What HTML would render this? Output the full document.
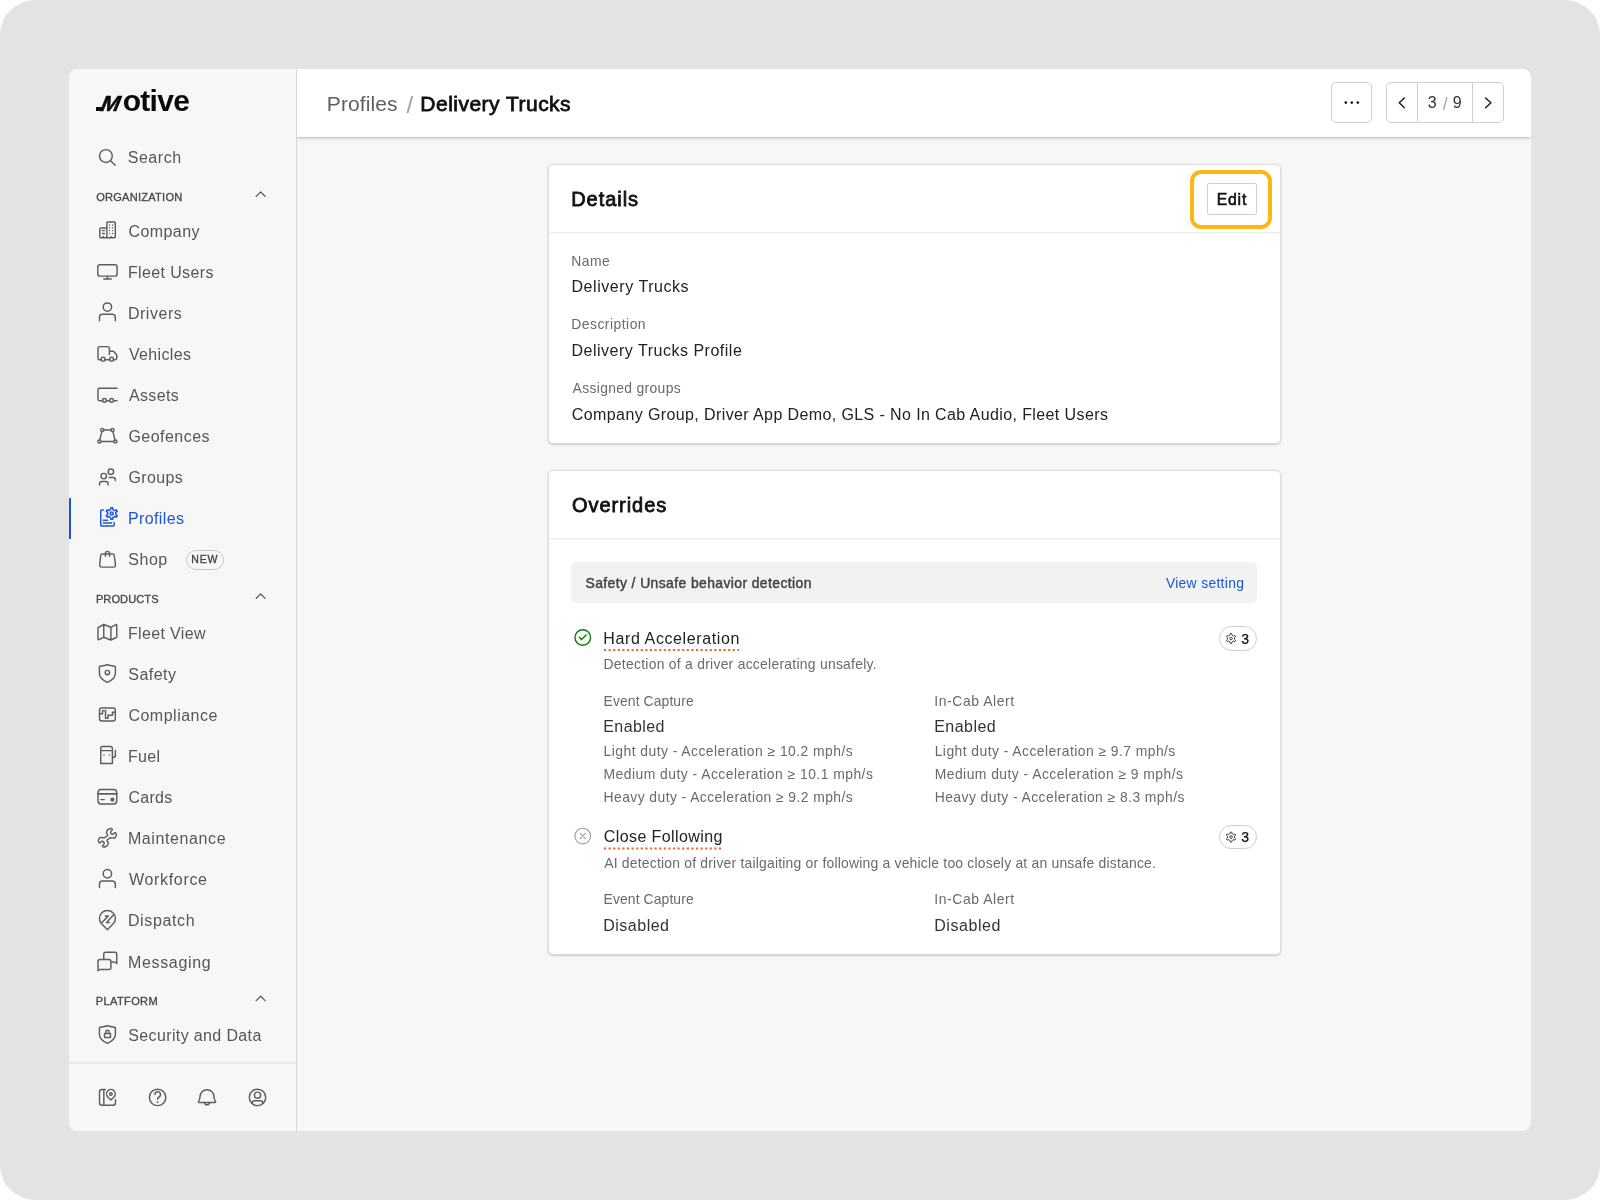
<!DOCTYPE html><html lang="en"><head><meta charset="utf-8"><title>Profiles / Delivery Trucks</title><style>
*{box-sizing:border-box;margin:0;padding:0}
html,body{width:1600px;height:1200px;overflow:hidden;background:#fff}
body{position:relative;font-family:"Liberation Sans",sans-serif}
.a{position:absolute}
.t{position:absolute;white-space:pre;line-height:1;font-family:"Liberation Sans",sans-serif}
#bg{left:0;top:0;width:1600px;height:1200px;background:#e3e3e3;border-radius:35px}
#panel{left:69px;top:69px;width:1462px;height:1062px;background:#f7f7f7;border-radius:8px;overflow:hidden}
#side{left:69px;top:69px;width:228px;height:1062px;border-right:1px solid #d6d6d6;border-radius:8px 0 0 8px}
#sdiv{left:69px;top:1062px;width:227px;height:2px;background:linear-gradient(#e7e7e7 50%,#ededed 50%)}
#active{left:69px;top:498px;width:2px;height:41px;background:#1a56d6}
#head{left:297px;top:69px;width:1234px;height:68px;background:#fff;border-radius:0 8px 0 0;box-shadow:0 1px 2px rgba(0,0,0,.17),0 2px 5px rgba(0,0,0,.09);clip-path:inset(0 0 -12px 0)}
.btn{background:#fff;border:1px solid #cfcfcf;border-radius:5px}
.card{background:#fff;border:1px solid #e0e0e0;border-bottom-color:#d8d8d8;border-radius:5px;box-shadow:0 0 0 1px rgba(0,0,0,.028),0 1px 2px rgba(0,0,0,.15)}
.hr{height:2px;background:linear-gradient(#eeeeee 50%,#f6f6f6 50%)}
.pill{border:1px solid #cfcfcf;border-radius:20px;background:#fff}
</style></head><body>
<div class="a" id="bg"></div><div class="a" id="panel"></div><div class="a" id="side"></div><div class="a" id="sdiv"></div><div class="a" id="active"></div>
<div class="a" id="head"></div>
<div class="a btn" style="left:1331px;top:82px;width:41px;height:41px"></div>
<div class="a btn" style="left:1386px;top:82px;width:118px;height:41px"></div>
<div class="a" style="left:1417px;top:83px;width:1px;height:39px;background:#cfcfcf"></div>
<div class="a" style="left:1472px;top:83px;width:1px;height:39px;background:#cfcfcf"></div>
<div class="a card" style="left:548px;top:164px;width:733px;height:280px"></div>
<div class="a hr" style="left:549px;top:232px;width:731px"></div>
<div class="a" style="left:1190px;top:170.4px;width:82px;height:58.4px;border:4px solid #fdb714;border-radius:11px"></div>
<div class="a" style="left:1207px;top:183px;width:50px;height:32px;border:1px solid #cfcfcf;background:#fff;border-radius:2px"></div>
<div class="a card" style="left:548px;top:470px;width:733px;height:485px"></div>
<div class="a hr" style="left:549px;top:538px;width:731px"></div>
<div class="a" style="left:571px;top:562px;width:686px;height:41px;background:#f2f2f2;border-radius:5px"></div>
<div class="a pill" style="left:1218.6px;top:626.2px;width:38.4px;height:24.4px"></div>
<div class="a pill" style="left:1218.6px;top:824.8px;width:38.4px;height:24.4px"></div>
<div class="a pill" style="left:186px;top:550.2px;width:37.7px;height:20.3px;background:transparent;border-color:#c9c9c9"></div>
<div class="a" id="tx" style="left:0;top:0;width:1600px;height:1200px;will-change:transform">
<div class="t" style="left:128.41px;top:224.00px;font-size:16.0px;font-weight:400;color:#565656;letter-spacing:0.437px;">Company</div>
<div class="t" style="left:127.93px;top:265.00px;font-size:16.0px;font-weight:400;color:#565656;letter-spacing:0.373px;">Fleet Users</div>
<div class="t" style="left:127.93px;top:306.00px;font-size:16.0px;font-weight:400;color:#565656;letter-spacing:0.526px;">Drivers</div>
<div class="t" style="left:128.89px;top:347.00px;font-size:16.0px;font-weight:400;color:#565656;letter-spacing:0.370px;">Vehicles</div>
<div class="t" style="left:128.96px;top:388.00px;font-size:16.0px;font-weight:400;color:#565656;letter-spacing:0.343px;">Assets</div>
<div class="t" style="left:128.41px;top:429.00px;font-size:16.0px;font-weight:400;color:#565656;letter-spacing:0.472px;">Geofences</div>
<div class="t" style="left:128.41px;top:470.00px;font-size:16.0px;font-weight:400;color:#565656;letter-spacing:0.363px;">Groups</div>
<div class="t" style="left:127.93px;top:511.00px;font-size:16.0px;font-weight:400;color:#1a56d6;letter-spacing:0.400px;">Profiles</div>
<div class="t" style="left:128.25px;top:552.00px;font-size:16.0px;font-weight:400;color:#565656;letter-spacing:0.547px;">Shop</div>
<div class="t" style="left:127.93px;top:626.00px;font-size:16.0px;font-weight:400;color:#565656;letter-spacing:0.351px;">Fleet View</div>
<div class="t" style="left:128.25px;top:667.00px;font-size:16.0px;font-weight:400;color:#565656;letter-spacing:0.484px;">Safety</div>
<div class="t" style="left:128.41px;top:708.00px;font-size:16.0px;font-weight:400;color:#565656;letter-spacing:0.500px;">Compliance</div>
<div class="t" style="left:127.93px;top:749.00px;font-size:16.0px;font-weight:400;color:#565656;letter-spacing:0.304px;">Fuel</div>
<div class="t" style="left:128.41px;top:790.00px;font-size:16.0px;font-weight:400;color:#565656;letter-spacing:0.274px;">Cards</div>
<div class="t" style="left:127.93px;top:831.00px;font-size:16.0px;font-weight:400;color:#565656;letter-spacing:0.608px;">Maintenance</div>
<div class="t" style="left:128.97px;top:872.00px;font-size:16.0px;font-weight:400;color:#565656;letter-spacing:0.677px;">Workforce</div>
<div class="t" style="left:127.93px;top:913.00px;font-size:16.0px;font-weight:400;color:#565656;letter-spacing:0.636px;">Dispatch</div>
<div class="t" style="left:127.93px;top:955.00px;font-size:16.0px;font-weight:400;color:#565656;letter-spacing:0.681px;">Messaging</div>
<div class="t" style="left:128.25px;top:1028.00px;font-size:16.0px;font-weight:400;color:#565656;letter-spacing:0.369px;">Security and Data</div>
<div class="t" style="left:127.67px;top:150.00px;font-size:16.0px;font-weight:400;color:#565656;letter-spacing:0.571px;">Search</div>
<div class="t" style="left:96.13px;top:192.00px;font-size:11.1px;font-weight:400;color:#454545;letter-spacing:0.232px;-webkit-text-stroke:0.3px #454545;">ORGANIZATION</div>
<div class="t" style="left:95.89px;top:594.00px;font-size:11.1px;font-weight:400;color:#454545;letter-spacing:0.059px;-webkit-text-stroke:0.3px #454545;">PRODUCTS</div>
<div class="t" style="left:95.86px;top:996.00px;font-size:11.1px;font-weight:400;color:#454545;letter-spacing:0.323px;-webkit-text-stroke:0.3px #454545;">PLATFORM</div>
<div class="t" style="left:191.30px;top:554.00px;font-size:10.6px;font-weight:400;color:#444;letter-spacing:0.742px;-webkit-text-stroke:0.35px #444;">NEW</div>
<div class="t" style="left:326.86px;top:93.00px;font-size:21.0px;font-weight:400;color:#606060;letter-spacing:0.091px;">Profiles</div>
<div class="t" style="left:406.56px;top:93.00px;font-size:24.0px;font-weight:400;color:#a0a0a0;letter-spacing:0.000px;">/</div>
<div class="t" style="left:420.35px;top:93.00px;font-size:21.0px;font-weight:400;color:#111;letter-spacing:0.481px;-webkit-text-stroke:0.8px #111;">Delivery Trucks</div>
<div class="t" style="left:1427.64px;top:95.00px;font-size:16.0px;font-weight:400;color:#333;letter-spacing:0.000px;">3</div>
<div class="t" style="left:1442.84px;top:96.00px;font-size:17.5px;font-weight:400;color:#a8a8a8;letter-spacing:0.000px;">/</div>
<div class="t" style="left:1452.66px;top:95.00px;font-size:16.0px;font-weight:400;color:#333;letter-spacing:0.000px;">9</div>
<div class="t" style="left:571.17px;top:189.00px;font-size:20.0px;font-weight:400;color:#111;letter-spacing:0.970px;-webkit-text-stroke:0.8px #111;">Details</div>
<div class="t" style="left:1216.69px;top:192.00px;font-size:15.8px;font-weight:400;color:#111;letter-spacing:0.798px;-webkit-text-stroke:0.6px #111;">Edit</div>
<div class="t" style="left:571.22px;top:255.00px;font-size:13.9px;font-weight:400;color:#6a6a6a;letter-spacing:0.455px;">Name</div>
<div class="t" style="left:571.46px;top:279.00px;font-size:16.0px;font-weight:400;color:#222;letter-spacing:0.556px;">Delivery Trucks</div>
<div class="t" style="left:571.22px;top:318.00px;font-size:13.9px;font-weight:400;color:#6a6a6a;letter-spacing:0.487px;">Description</div>
<div class="t" style="left:571.46px;top:343.00px;font-size:16.0px;font-weight:400;color:#222;letter-spacing:0.508px;">Delivery Trucks Profile</div>
<div class="t" style="left:572.59px;top:382.00px;font-size:13.9px;font-weight:400;color:#6a6a6a;letter-spacing:0.329px;">Assigned groups</div>
<div class="t" style="left:571.86px;top:407.00px;font-size:16.0px;font-weight:400;color:#222;letter-spacing:0.394px;">Company Group, Driver App Demo, GLS - No In Cab Audio, Fleet Users</div>
<div class="t" style="left:571.92px;top:495.00px;font-size:20.0px;font-weight:400;color:#111;letter-spacing:0.962px;-webkit-text-stroke:0.8px #111;">Overrides</div>
<div class="t" style="left:585.53px;top:577.00px;font-size:13.9px;font-weight:400;color:#444;letter-spacing:0.409px;-webkit-text-stroke:0.45px #444;">Safety / Unsafe behavior detection</div>
<div class="t" style="left:1165.88px;top:577.00px;font-size:13.9px;font-weight:400;color:#1a56d6;letter-spacing:0.308px;">View setting</div>
<div class="t" style="left:603.27px;top:631.00px;font-size:16.0px;font-weight:400;color:#222;letter-spacing:0.616px;">Hard Acceleration</div>
<div class="t" style="left:603.55px;top:658.00px;font-size:13.9px;font-weight:400;color:#6a6a6a;letter-spacing:0.270px;">Detection of a driver accelerating unsafely.</div>
<div class="t" style="left:603.55px;top:695.00px;font-size:13.9px;font-weight:400;color:#6a6a6a;letter-spacing:0.108px;">Event Capture</div>
<div class="t" style="left:603.28px;top:719.00px;font-size:16.0px;font-weight:400;color:#333;letter-spacing:0.404px;">Enabled</div>
<div class="t" style="left:603.55px;top:745.00px;font-size:13.9px;font-weight:400;color:#6a6a6a;letter-spacing:0.456px;">Light duty - Acceleration ≥ 10.2 mph/s</div>
<div class="t" style="left:603.55px;top:768.00px;font-size:13.9px;font-weight:400;color:#6a6a6a;letter-spacing:0.467px;">Medium duty - Acceleration ≥ 10.1 mph/s</div>
<div class="t" style="left:603.55px;top:791.00px;font-size:13.9px;font-weight:400;color:#6a6a6a;letter-spacing:0.426px;">Heavy duty - Acceleration ≥ 9.2 mph/s</div>
<div class="t" style="left:934.30px;top:695.00px;font-size:13.9px;font-weight:400;color:#6a6a6a;letter-spacing:0.591px;">In-Cab Alert</div>
<div class="t" style="left:934.17px;top:719.00px;font-size:16.0px;font-weight:400;color:#333;letter-spacing:0.480px;">Enabled</div>
<div class="t" style="left:934.71px;top:745.00px;font-size:13.9px;font-weight:400;color:#6a6a6a;letter-spacing:0.445px;">Light duty - Acceleration ≥ 9.7 mph/s</div>
<div class="t" style="left:934.71px;top:768.00px;font-size:13.9px;font-weight:400;color:#6a6a6a;letter-spacing:0.455px;">Medium duty - Acceleration ≥ 9 mph/s</div>
<div class="t" style="left:934.71px;top:791.00px;font-size:13.9px;font-weight:400;color:#6a6a6a;letter-spacing:0.442px;">Heavy duty - Acceleration ≥ 8.3 mph/s</div>
<div class="t" style="left:1241.29px;top:632.00px;font-size:14.0px;font-weight:400;color:#111;letter-spacing:0.000px;-webkit-text-stroke:0.25px #111;">3</div>
<div class="t" style="left:603.75px;top:829.00px;font-size:16.0px;font-weight:400;color:#222;letter-spacing:0.408px;">Close Following</div>
<div class="t" style="left:604.19px;top:857.00px;font-size:13.9px;font-weight:400;color:#6a6a6a;letter-spacing:0.216px;">AI detection of driver tailgaiting or following a vehicle too closely at an unsafe distance.</div>
<div class="t" style="left:603.55px;top:893.00px;font-size:13.9px;font-weight:400;color:#6a6a6a;letter-spacing:0.108px;">Event Capture</div>
<div class="t" style="left:603.28px;top:918.00px;font-size:16.0px;font-weight:400;color:#333;letter-spacing:0.496px;">Disabled</div>
<div class="t" style="left:934.30px;top:893.00px;font-size:13.9px;font-weight:400;color:#6a6a6a;letter-spacing:0.591px;">In-Cab Alert</div>
<div class="t" style="left:934.17px;top:918.00px;font-size:16.0px;font-weight:400;color:#333;letter-spacing:0.578px;">Disabled</div>
<div class="t" style="left:1241.29px;top:830.00px;font-size:14.0px;font-weight:400;color:#111;letter-spacing:0.000px;-webkit-text-stroke:0.25px #111;">3</div>
</div>
<div class="a" style="left:95.9px;top:107.3px;width:7px;height:3.7px;background:#0a0a0a"></div>
<div class="t" id="logo" style="left:99.0px;top:86px;font-size:30px;font-weight:700;color:#0a0a0a;letter-spacing:-0.75px"><span id="lm" style="display:inline-block;font-size:21.8px;letter-spacing:0;width:23.8px;transform-origin:0 80%;transform:skewX(-22deg) scaleX(1.04);-webkit-text-stroke:0.45px #0a0a0a">M</span>otive</div>
<svg class="a" style="left:0;top:0" width="1600" height="1200" viewBox="0 0 1600 1200"><g fill="none" stroke="#5e5e5e" stroke-width="1.45" stroke-linecap="round" stroke-linejoin="round">
<circle cx="105.9" cy="156" r="6.4"/><path d="M110.6,160.7 L115.2,165.3"/>
<path d="M106.9,238 V223.2 a1.2,1.2 0 0 1 1.2,-1.2 h6 a1.2,1.2 0 0 1 1.2,1.2 V236.6 a1.2,1.2 0 0 1 -1.2,1.2 H101 a1.2,1.2 0 0 1 -1.2,-1.2 V229.2 a1.2,1.2 0 0 1 1.2,-1.2 h5.9"/>
<path d="M109.6,224.9h0.01M112.6,224.9h0.01M109.6,227.8h0.01M112.6,227.8h0.01M109.6,230.6h0.01M112.6,230.6h0.01M109.6,233.5h0.01M112.6,233.5h0.01M102.4,230.6h2M102.4,233.5h2M103.3,237.5v-1M111,237.5v-1"/>
<rect x="97.8" y="264.7" width="19.3" height="11.4" rx="2.2"/><path d="M107.45,276.2 V278.9 M103.8,278.9 H111.2"/>
<circle cx="107.4" cy="307.1" r="4.2"/><path d="M99.5,320.8 v-3.5 a3,3 0 0 1 3,-3 h9.8 a3,3 0 0 1 3,3 v3.5"/>
<path d="M101.2,359.7 H99.5 a1.5,1.5 0 0 1 -1.5,-1.5 V348.6 a2,2 0 0 1 2,-2 h7.4 a2,2 0 0 1 2,2 V354.4 M109.4,351.3 h3.6 a1.4,1.4 0 0 1 1,0.5 l2.4,2.6 a1.4,1.4 0 0 1 0.35,0.9 V358.3 a1.4,1.4 0 0 1 -1.4,1.4 h-1.8 M105,359.7 h4.7"/>
<circle cx="103.1" cy="359.2" r="1.9"/><circle cx="111.6" cy="359.2" r="1.9"/>
<path d="M117,388.3 H99.5 a1.5,1.5 0 0 0 -1.5,1.5 V399.3 a1.5,1.5 0 0 0 1.5,1.5 h3.1 M106.4,400.8 h3.3 M113.6,400.8 h3.4"/>
<circle cx="104.5" cy="400.3" r="1.9"/><circle cx="111.6" cy="400.3" r="1.9"/>
<circle cx="102.3" cy="429.9" r="1.55"/><circle cx="112.5" cy="429.9" r="1.55"/><circle cx="99.4" cy="441.5" r="1.55"/><circle cx="115.4" cy="441.5" r="1.55"/>
<path d="M103.9,429.9 H110.9 M101,441.5 H113.8 M101.9,431.4 L99.8,440 M112.9,431.4 L115,440"/>
<circle cx="103.75" cy="476.1" r="2.75"/><circle cx="110.9" cy="471.75" r="2.75"/>
<path d="M99.5,485 v-1.2 a2.3,2.3 0 0 1 2.3,-2.3 h4 a2.3,2.3 0 0 1 2.3,2.3 v1.2 M109.3,477.4 h3.8 a2.3,2.3 0 0 1 2.3,2.3 v0.8"/>
<path d="M102.3,553.9 H112.6 a1.6,1.6 0 0 1 1.6,1.5 L115.5,565.2 a1.7,1.7 0 0 1 -1.7,1.9 H101.4 a1.7,1.7 0 0 1 -1.7,-1.9 L100.7,555.4 a1.6,1.6 0 0 1 1.6,-1.5 Z"/><path d="M105.4,556.3 V553.4 a2.05,2.05 0 0 1 4.1,0 V556.3"/>
<path d="M98,628.3 a1,1 0 0 1 0.5,-0.9 L103.75,624.5 L110.9,627.3 L116,624.6 a0.5,0.5 0 0 1 0.75,0.45 V636.7 a1,1 0 0 1 -0.5,0.8 L110.9,640 L103.75,637.3 L98.75,639.7 a0.5,0.5 0 0 1 -0.75,-0.45 Z M103.75,624.5 V637.3 M110.9,627.3 V640"/>
<path d="M107.4,664.7 C109.9,665.6 112.4,665.9000000000001 114.7,666.2 a0.8,0.8 0 0 1 0.7,0.8 V673.2 C115.4,677.5 111.4,680.5 107.4,682.3000000000001 C103.4,680.5 99.4,677.5 99.4,673.2 V667.0 a0.8,0.8 0 0 1 0.7,-0.8 C102.4,665.9000000000001 104.9,665.6 107.4,664.7 Z"/>
<circle cx="107.4" cy="672.6" r="2.2"/>
<rect x="99.5" y="707.9" width="15.8" height="13.1" rx="2.2"/><path d="M99.5,713.8 H102.5 V710.6 H105.5 V718.2 H108 V715.3 H112.5 V712.3 H115.3"/>
<path d="M100.75,763.5 V748.5 a2,2 0 0 1 2,-2 h7.65 a2,2 0 0 1 2,2 V763.5 Z M100.75,750.6 H112.4 M112.4,757.5 h0.8 a2.2,2.2 0 0 0 2.2,-2.2 V750.5"/><path d="M103.9,754.9h0.01M109.4,754.9h0.01"/>
<rect x="98" y="789.5" width="18.75" height="14.5" rx="3.2"/><path d="M98,793.8 H116.75" stroke-width="1.8"/><path d="M100.8,799.6 H104.3"/>
<circle cx="112.4" cy="799.6" r="1.4" fill="#5e5e5e"/>
<path d="M107.75,835.25 C107.81,834.67 106.79,833.71 106.62,833.00 C106.46,832.29 106.44,831.62 106.75,831.00 C107.06,830.38 107.75,829.69 108.50,829.25 C109.25,828.81 110.60,828.31 111.25,828.38 C111.90,828.44 112.42,829.19 112.38,829.62 C112.33,830.06 111.29,830.48 111.00,831.00 C110.71,831.52 110.50,832.25 110.62,832.75 C110.75,833.25 111.31,833.77 111.75,834.00 C112.19,834.23 112.77,834.33 113.25,834.12 C113.73,833.92 114.15,832.85 114.62,832.75 C115.10,832.65 115.88,832.96 116.12,833.50 C116.38,834.04 116.40,835.25 116.12,836.00 C115.85,836.75 115.19,837.71 114.50,838.00 C113.81,838.29 112.75,837.75 112.00,837.75 C111.25,837.75 110.58,837.79 110.00,838.00 C109.42,838.21 109.00,838.62 108.50,839.00 C108.00,839.38 107.06,839.67 107.00,840.25 C106.94,840.83 107.96,841.79 108.12,842.50 C108.29,843.21 108.31,843.88 108.00,844.50 C107.69,845.12 107.00,845.81 106.25,846.25 C105.50,846.69 104.15,847.19 103.50,847.12 C102.85,847.06 102.33,846.31 102.38,845.88 C102.42,845.44 103.46,845.02 103.75,844.50 C104.04,843.98 104.25,843.25 104.12,842.75 C104.00,842.25 103.44,841.73 103.00,841.50 C102.56,841.27 101.98,841.17 101.50,841.38 C101.02,841.58 100.60,842.65 100.12,842.75 C99.65,842.85 98.88,842.54 98.62,842.00 C98.38,841.46 98.35,840.25 98.62,839.50 C98.90,838.75 99.56,837.79 100.25,837.50 C100.94,837.21 102.00,837.75 102.75,837.75 C103.50,837.75 104.17,837.71 104.75,837.50 C105.33,837.29 105.75,836.88 106.25,836.50 C106.75,836.12 107.69,835.83 107.75,835.25Z"/>
<circle cx="107.4" cy="873.7" r="4.2"/><path d="M99.5,887.4000000000001 v-3.5 a3,3 0 0 1 3,-3 h9.8 a3,3 0 0 1 3,3 v3.5"/>
<path d="M107.4,929.7 L101.6,923.8 a7.95,7.95 0 1 1 11.6,0 Z"/><path d="M101.9,922.4 L108.4,916 H105.3 M113.4,915.1 L106.6,922.6 H109.5"/>
<path d="M98,970.6 V961.4 a2,2 0 0 1 2,-2 h8.9 a2,2 0 0 1 2,2 V967.4 a2,2 0 0 1 -2,2 H100.3 Z"/><path d="M103.75,959.2 V954.2 a2,2 0 0 1 2,-2 h9 a2,2 0 0 1 2,2 V963.5 L114.6,962 H111.1"/>
<path d="M107.4,1025.7 C109.9,1026.6000000000001 112.4,1026.9 114.7,1027.2 a0.8,0.8 0 0 1 0.7,0.8 V1034.2 C115.4,1038.5 111.4,1041.5 107.4,1043.3 C103.4,1041.5 99.4,1038.5 99.4,1034.2 V1028.0 a0.8,0.8 0 0 1 0.7,-0.8 C102.4,1026.9 104.9,1026.6000000000001 107.4,1025.7 Z"/>
<rect x="104.5" y="1033.5" width="6" height="4" rx="0.6"/><path d="M105.8,1033.4 V1031.9 a1.65,1.65 0 0 1 3.3,0 V1033.4"/>
<path d="M105.3,1089.5 H102 a2.5,2.5 0 0 0 -2.5,2.5 V1102.7 a2.5,2.5 0 0 0 2.5,2.5 H113 a2.5,2.5 0 0 0 2.5,-2.5 V1099.6 M103.85,1089.5 V1105.2"/>
<path d="M110.9,1100 L107.8,1096.9 a4.35,4.35 0 1 1 6.2,0 Z"/><circle cx="110.9" cy="1093.9" r="1.25"/>
<circle cx="157.6" cy="1097.4" r="8.2"/><path d="M154.9,1094.6 a2.8,2.8 0 1 1 4.2,2.4 c-1,0.6 -1.5,1.2 -1.5,2.3"/><path d="M157.6,1102.2h0.01" stroke-width="1.8"/>
<path d="M199.2,1102.5 a0.8,0.8 0 0 1 -0.6,-1.3 c1,-1.3 1.4,-2.4 1.4,-4.4 a7,7 0 0 1 14,0 c0,2 0.4,3.1 1.4,4.4 a0.8,0.8 0 0 1 -0.6,1.3 Z M204.3,1102.6 a2.75,2.75 0 0 0 5.4,0"/>
<circle cx="257.5" cy="1097.4" r="8.2"/><circle cx="257.5" cy="1095.2" r="3.1"/><path d="M251.9,1103.3 a3,3 0 0 1 2.8,-2.5 h5.6 a3,3 0 0 1 2.8,2.5"/>
</g>
<g fill="none" stroke="#1a56d6" stroke-width="1.45" stroke-linecap="round" stroke-linejoin="round">
<path d="M103.6,510 H101.6 a0.85,0.85 0 0 0 -0.85,0.85 V525.1 a0.85,0.85 0 0 0 0.85,0.85 H113.3 a0.85,0.85 0 0 0 0.85,-0.85 V522.5 M103.3,520.3 H107.7 M103.3,522.9 H111.6"/>
<path d="M112.62,507.66 L110.88,507.66 L110.66,509.44 L108.78,510.53 L107.13,509.83 L106.26,511.34 L107.69,512.41 L107.69,514.59 L106.26,515.66 L107.13,517.17 L108.78,516.47 L110.66,517.56 L110.88,519.34 L112.62,519.34 L112.84,517.56 L114.72,516.47 L116.37,517.17 L117.24,515.66 L115.81,514.59 L115.81,512.41 L117.24,511.34 L116.37,509.83 L114.72,510.53 L112.84,509.44Z"/><circle cx="111.75" cy="513.5" r="1.5"/>
</g>
<g fill="none" stroke="#4a4a4a" stroke-width="1.15" stroke-linecap="round" stroke-linejoin="round">
<path d="M256.2,196.4 L260.65,191.9 L265.1,196.4"/>
<path d="M256.2,598.4 L260.65,593.9 L265.1,598.4"/>
<path d="M256.2,1000.7 L260.65,996.2 L265.1,1000.7"/>
</g>
<g fill="#111"><circle cx="1345.8" cy="102.6" r="1.3"/><circle cx="1351.8" cy="102.6" r="1.3"/><circle cx="1357.8" cy="102.6" r="1.3"/></g>
<g fill="none" stroke="#222" stroke-width="1.5" stroke-linecap="round" stroke-linejoin="round"><path d="M1404.4,98 L1399.2,102.8 L1404.4,107.7"/><path d="M1485.6,98 L1490.9,102.8 L1485.6,107.7"/></g>
<g fill="none" stroke="#0b7a0b" stroke-width="1.4" stroke-linecap="round" stroke-linejoin="round"><circle cx="582.75" cy="637.5" r="7.8"/><path d="M579.4,637.3 L581.5,639.6 L586.2,635"/></g>
<g fill="none" stroke="#a4a4a4" stroke-width="1.2" stroke-linecap="round"><circle cx="582.75" cy="836.05" r="7.8"/><path d="M580.1,833.4 L585.5,838.7 M585.5,833.4 L580.1,838.7"/></g>
<g stroke="#f2672c" stroke-width="2" stroke-dasharray="2.2 2.4"><path d="M603.9,650 H739"/><path d="M603.9,848.4 H722"/></g>
<g fill="none" stroke="#333" stroke-width="0.9" stroke-linejoin="round"><path d="M1231.74,633.55 L1230.26,633.55 L1230.07,635.02 L1228.45,635.95 L1227.09,635.39 L1226.35,636.67 L1227.52,637.57 L1227.52,639.43 L1226.35,640.33 L1227.09,641.61 L1228.45,641.05 L1230.07,641.98 L1230.26,643.45 L1231.74,643.45 L1231.93,641.98 L1233.55,641.05 L1234.91,641.61 L1235.65,640.33 L1234.48,639.43 L1234.48,637.57 L1235.65,636.67 L1234.91,635.39 L1233.55,635.95 L1231.93,635.02Z"/><circle cx="1231" cy="638.5" r="1.3"/></g>
<g fill="none" stroke="#333" stroke-width="0.9" stroke-linejoin="round"><path d="M1231.74,832.15 L1230.26,832.15 L1230.07,833.62 L1228.45,834.55 L1227.09,833.99 L1226.35,835.27 L1227.52,836.17 L1227.52,838.03 L1226.35,838.93 L1227.09,840.21 L1228.45,839.65 L1230.07,840.58 L1230.26,842.05 L1231.74,842.05 L1231.93,840.58 L1233.55,839.65 L1234.91,840.21 L1235.65,838.93 L1234.48,838.03 L1234.48,836.17 L1235.65,835.27 L1234.91,833.99 L1233.55,834.55 L1231.93,833.62Z"/><circle cx="1231" cy="837.1" r="1.3"/></g></svg>
</body></html>
